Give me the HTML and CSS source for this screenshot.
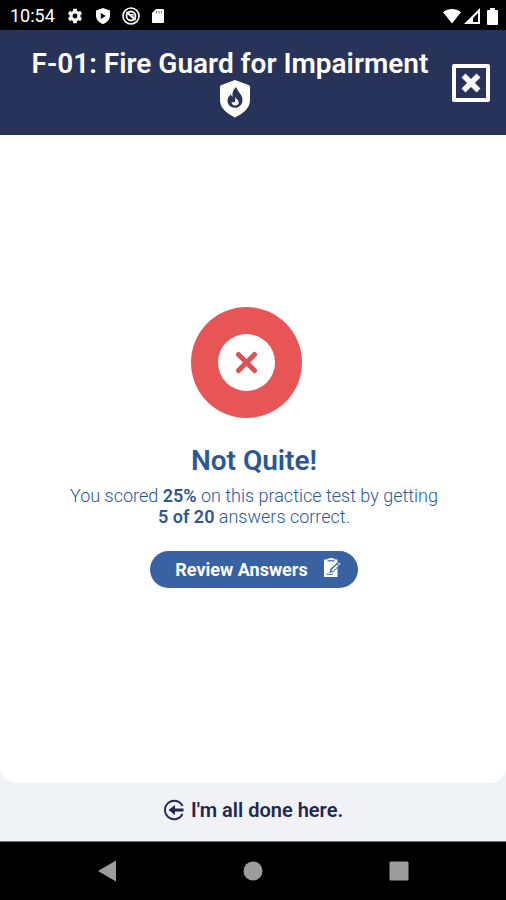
FILE: index.html
```html
<!DOCTYPE html>
<html lang="en">
<head>
<meta charset="utf-8">
<meta name="viewport" content="width=device-width, initial-scale=1">
<title>F-01: Fire Guard for Impairment</title>
<link rel="stylesheet" href="styles.css">
</head>
<body>
<div class="status">
  <div class="status-left">
    <span class="clock">10:54</span>
    <svg width="18" height="18" viewBox="0 0 24 24"><path fill="#fff" d="M19.140 12.940c.04-.3.060-.61.060-.94 0-.32-.02-.64-.07-.94l2.030-1.580c.18-.14.23-.41.120-.61l-1.920-3.320c-.12-.22-.37-.29-.59-.22l-2.390.96c-.5-.38-1.030-.7-1.620-.94l-.36-2.540c-.04-.24-.24-.41-.48-.41h-3.840c-.24 0-.43.170-.47.410l-.36 2.540c-.59.240-1.130.57-1.620.94l-2.390-.96c-.22-.08-.47 0-.59.220L2.740 8.870c-.12.210-.08.470.120.610l2.030 1.580c-.05.3-.09.630-.09.940s.02.640.070.940l-2.030 1.580c-.18.140-.23.410-.12.610l1.920 3.320c.12.220.37.290.59.220l2.390-.96c.5.380 1.030.7 1.620.94l.36 2.540c.05.240.24.410.48.410h3.840c.24 0 .44-.17.470-.41l.36-2.540c.59-.24 1.130-.56 1.620-.94l2.390.96c.22.080.47 0 .59-.22l1.920-3.320c.12-.22.070-.47-.12-.61zM12 15.300a3.300 3.300 0 1 1 0-6.600 3.300 3.300 0 0 1 0 6.600z"/></svg>
    <svg width="16" height="18" viewBox="0 0 16 18"><path fill="#fff" fill-rule="evenodd" d="M8 1 15 3.500V8.500C15 12.500 12 15.800 8 17 4 15.800 1 12.500 1 8.500V3.500zM5.800 6v6l5-3z"/></svg>
    <svg width="18" height="18" viewBox="0 0 18 18" fill="none" stroke="#fff"><circle cx="9" cy="9" r="8" stroke-width="1.600"/><circle cx="9" cy="9" r="4.500" stroke-width="1.800"/><path d="m4.500 5 9 8" stroke-width="2"/><path d="M8 7.500h3v2.500" stroke-width="1.200"/></svg>
    <svg width="14" height="16" viewBox="0 0 14 16"><path fill="#fff" d="M5 1h7q1 0 1 1v12q0 1-1 1H2q-1 0-1-1V5z"/><path stroke="#777" d="M5.500 3v2.500m2.500-2.500v2.500m2.500-2.500v2.500"/></svg>
  </div>
  <div class="status-right">
    <svg width="20" height="16" viewBox="0 0 20 16"><path fill="#fff" d="M1 4.200C6-.2 14-.2 19 4.200L10 15.500z"/></svg>
    <svg width="17" height="16" viewBox="0 0 17 16"><path fill="#fff" fill-rule="evenodd" d="M16 0v16H0zM14 5 9 10v4h5z"/></svg>
    <svg class="battery" width="11" height="17" viewBox="0 0 11 17"><path fill="#fff" d="M3 0h5v2h2q1 0 1 1v13q0 1-1 1H1q-1 0-1-1V3q0-1 1-1h2z"/></svg>
  </div>
</div>
<header class="header">
  <h1 class="title">F-01: Fire Guard for Impairment
    <svg class="shield" width="32" height="38" viewBox="0 0 32 38"><path fill="#fff" d="M16 0 29.500 5q1.500.6 1.500 2.200V20C31 28 25 33 16 37.500 7 33 1 28 1 20V7.200Q1 5.600 2.500 5z"/><path fill="#28335a" d="M17.200 7c1 4.500 6.300 7 6.300 13 0 4.600-3.400 7.800-7.600 7.800S8.500 24.600 8.500 20.800c0-3 1.500-4.600 3.300-6.500.4 1.300.9 2 1.800 2.500-.7-4 .6-7.500 3.600-9.800z"/><path fill="#fff" d="M16.700 16.500c-.2 2.600 3 3.300 3 5.900 0 1.800-1.500 3-3.500 3s-3.700-1.300-3.700-3.200h3c1.600-1.200.2-3.700 1.200-5.700z"/></svg>
  </h1>
  <button class="close" type="button" aria-label="Close">
    <svg width="20" height="20" viewBox="0 0 20 20"><path d="m2.500 2.500 15 15m0-15-15 15" stroke="#fff" stroke-width="5.500"/></svg>
  </button>
</header>
<div class="body">
  <main class="result">
    <svg class="badge" width="111" height="111" viewBox="0 0 111 111"><circle cx="55.500" cy="55.500" r="55.500" fill="#e75557"/><circle cx="55.500" cy="55.500" r="28.500" fill="#fff"/><path d="m47.500 47.500 16 16m0-16-16 16" stroke="#df5054" stroke-width="5" stroke-linecap="round"/></svg>
    <h2 class="heading">Not Quite!</h2>
    <p class="score">You scored <b>25%</b> on this practice test by getting <b>5 of 20</b> answers correct.</p>
    <button class="review" type="button">Review Answers
      <svg width="18" height="21" viewBox="0 0 18 21"><path fill="#fff" d="M1 2.500h3.500V1.500h2a2 2 0 0 1 3 0h2v1H14.500V20H1z"/><path d="M4.500 3.800h7" stroke="#3862a2" stroke-width="1.200"/><path d="m7.300 12 7-6.500 3 2.500-7 7-3.800 1z" fill="#3862a2"/><path d="m8.800 12.500 5.300-5 1.500 1.300-5.400 5.200-1.900.4zM15 6.600l1-.9 1.500 1.400-1 .9z" fill="#fff"/><path d="M3.500 17.300h6.500" stroke="#3862a2"/></svg>
    </button>
  </main>
  <footer class="footer">
    <a class="done" href="#">
      <svg width="22" height="22" viewBox="0 0 22 22"><path d="M19.500 7A9.200 9.200 0 1 0 19.500 15" fill="none" stroke="#222750" stroke-width="1.900"/><path d="M5.500 11 12 6v3.600h8.500v2.800H12V16z" fill="#222750"/></svg>
      I'm all done here.
    </a>
  </footer>
</div>
<nav class="nav">
  <button type="button" aria-label="Back"><svg width="20" height="22" viewBox="0 0 20 22"><path fill="#9d9d9d" d="M19 .5v21L1 11z"/></svg></button>
  <button type="button" aria-label="Home"><svg width="20" height="20" viewBox="0 0 20 20"><circle cx="10" cy="10" r="9.500" fill="#9d9d9d"/></svg></button>
  <button type="button" aria-label="Recent apps"><svg width="20" height="20" viewBox="0 0 20 20"><rect x=".5" y=".5" width="19" height="19" rx="1.500" fill="#9d9d9d"/></svg></button>
</nav>
</body>
</html>
```
FILE: styles.css
```css
* { box-sizing: border-box; }
body {
  margin: 0;
  min-height: 100vh;
  display: flex;
  flex-direction: column;
  font-family: Roboto, "Liberation Sans", sans-serif;
  background: #fff;
}
svg { display: block; flex: none; }
button { border: 0; padding: 0; background: none; font: inherit; cursor: pointer; }
h1, h2, p { margin: 0; }

.status {
  height: 30px;
  padding: 2px 8px 0 10px;
  display: flex;
  align-items: center;
  justify-content: space-between;
  background: #000;
  color: #fff;
}
.status-left { display: flex; align-items: center; gap: 11px; }
.status-right { display: flex; align-items: center; gap: 2px; }
.clock { font-size: 18px; line-height: 24px; }
.battery { margin-left: 4px; }

.header {
  min-height: 105px;
  padding: 0 16px 0 28px;
  display: flex;
  align-items: center;
  justify-content: space-between;
  gap: 20px;
  background: #28335a;
  color: #fff;
}
.title {
  flex: 1;
  display: flex;
  flex-direction: column;
  align-items: center;
  font-size: 28px;
  line-height: 32px;
  font-weight: 600;
  text-align: center;
}
.shield { margin-left: 10px; }
.close {
  width: 38px;
  height: 38px;
  display: grid;
  place-items: center;
  border: 4px solid #fff;
  border-radius: 2px;
}

.body {
  flex: 1;
  display: flex;
  flex-direction: column;
  background: #f0f2f6;
}
.result {
  flex: 1;
  padding: 0 56px 24px 58px;
  display: flex;
  flex-direction: column;
  align-items: center;
  justify-content: center;
  background: #fff;
  border-radius: 0 0 16px 16px;
  color: #2b5797;
}
.badge { margin-right: 16px; }
.heading {
  margin-top: 27px;
  font-size: 28px;
  line-height: 32px;
  font-weight: 600;
}
.score {
  max-width: 380px;
  margin-top: 8px;
  font-size: 18px;
  line-height: 21px;
  font-weight: 300;
  text-align: center;
}
.score b { font-weight: 600; }
.review {
  margin-top: 24px;
  min-height: 37px;
  padding: 0 17px 0 25px;
  display: flex;
  align-items: center;
  gap: 15px;
  border-radius: 20px;
  background: #3862a2;
  color: #fff;
  font-size: 18px;
  font-weight: 700;
}
.review svg { margin-bottom: 4px; }

.footer {
  min-height: 58px;
  display: flex;
  align-items: center;
  justify-content: center;
  padding-bottom: 5px;
}
.done {
  display: flex;
  align-items: center;
  gap: 6px;
  color: #222750;
  font-size: 20px;
  line-height: 24px;
  font-weight: 600;
  text-decoration: none;
}

.nav {
  min-height: 59px;
  padding: 0 34px;
  display: grid;
  grid-template-columns: repeat(3, 1fr);
  background: #000;
  border-top: 1px solid #777;
}
.nav button { display: grid; place-items: center; }
```
